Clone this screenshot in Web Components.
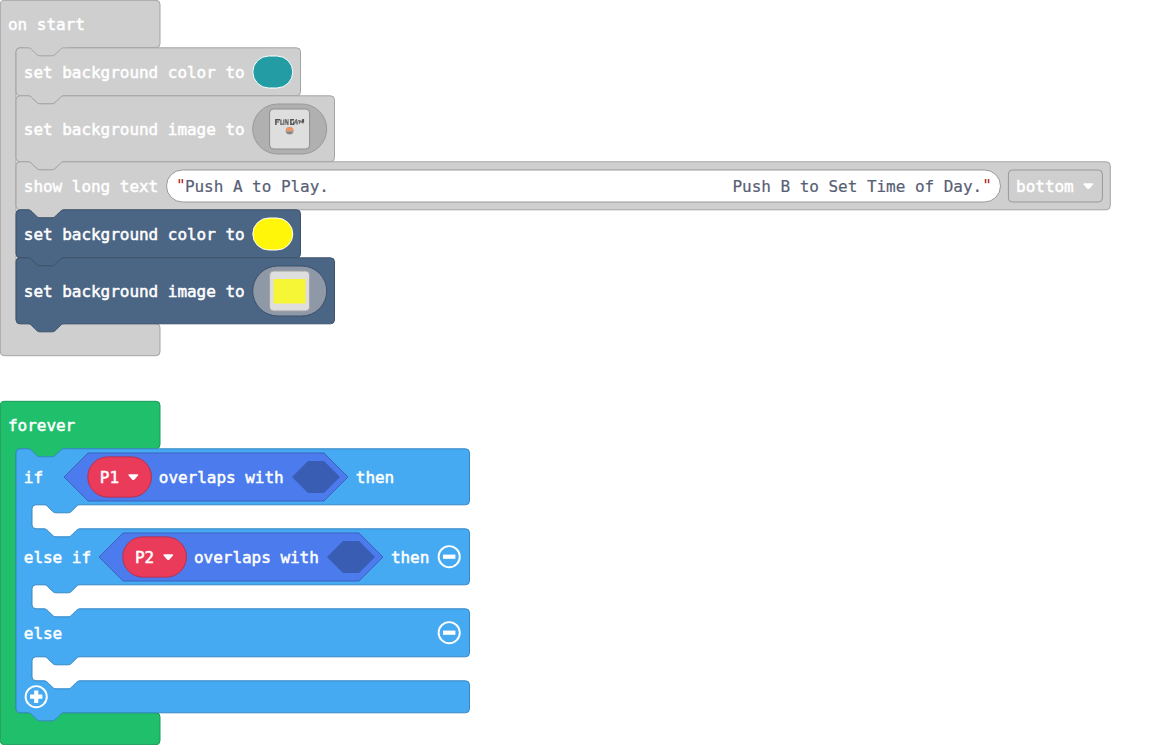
<!DOCTYPE html>
<html lang="en">
<head>
<meta charset="utf-8">
<title>Blocks workspace</title>
<style>
html,body{margin:0;background:#fff;overflow:hidden}
</style>
</head>
<body>
<blocks-workspace>
  <event-block label="on start" fill="#cfcfcf" edge="#a4a4a4" rows="276">
    <stack-block width="284.5" height="48" fill="#cfcfcf" edge="#a4a4a4">
      <block-label>set background color to</block-label><color-field color="#249ca3"></color-field>
    </stack-block>
    <stack-block width="318.5" height="66" fill="#cfcfcf" edge="#a4a4a4">
      <block-label>set background image to</block-label><image-field art="title" fill="#b0b0b0" edge="#999"></image-field>
    </stack-block>
    <stack-block width="1094.3" height="48" fill="#cfcfcf" edge="#a4a4a4">
      <block-label>show long text</block-label>
      <text-field><span>Push A to Play.</span><span>Push B to Set Time of Day.</span></text-field>
      <menu-field>bottom</menu-field>
    </stack-block>
    <stack-block width="284.5" height="48" fill="#4b6584" edge="#3c516a">
      <block-label>set background color to</block-label><color-field color="#fff609"></color-field>
    </stack-block>
    <stack-block width="318.5" height="66" fill="#4b6584" edge="#3c516a">
      <block-label>set background image to</block-label><image-field art="solid" fill="#8f98a6" edge="#3c516a"></image-field>
    </stack-block>
  </event-block>
  <event-block label="forever" fill="#20bf6b" edge="#1a9956" rows="264">
    <if-block>
      <block-label slot="r0" style="min-width:32px">if</block-label>
      <overlap-block slot="r0">P1</overlap-block>
      <block-label slot="r0">then</block-label>
      <block-label slot="r1">else if</block-label>
      <overlap-block slot="r1">P2</overlap-block>
      <block-label slot="r1">then</block-label>
      <round-button slot="r1"></round-button>
      <block-label slot="r2">else</block-label>
      <round-button slot="r2"></round-button>
      <round-button slot="r3" plus></round-button>
    </if-block>
  </event-block>
</blocks-workspace>
<script>
const NOTCH = 'c2,0 3,1 4,2 l4,4 c1,1 2,2 4,2 h12 c2,0 3,-1 4,-2 l4,-4 c1,-1 2,-2 4,-2';
const NOTCH_BACK = 'c-2,0 -3,1 -4,2 l-4,4 c-1,1 -2,2 -4,2 h-12 c-2,0 -3,-1 -4,-2 l-4,-4 c-1,-1 -2,-2 -4,-2';
const BASE = `:host{display:block;box-sizing:border-box;position:relative}
  *{box-sizing:border-box}
  .shape{position:absolute;left:0;top:0;overflow:visible;pointer-events:none}`;
const shape = (w, h, d, fill, edge) =>
  `<svg class="shape" width="${w}" height="${h}" viewBox="0 0 ${w} ${h}"><path d="${d}" fill="${fill}" stroke="${edge}" stroke-width="1"/></svg>`;

function define(name, render) {
  customElements.define(name, class extends HTMLElement {
    constructor() {
      super();
      this.attachShadow({mode: 'open'});
    }
    connectedCallback() {
      this.shadowRoot.innerHTML = render(n => this.getAttribute(n), this);
    }
  });
}

define('blocks-workspace', () => `<style>
  :host{display:flex;flex-direction:column;align-items:flex-start;gap:45px;width:1162px;height:745px;overflow:hidden;
    font:16px/20px "DejaVu Sans Mono",monospace;letter-spacing:-.033px;color:#fff}
  </style><slot></slot>`);

define('event-block', a => {
  const rows = +a('rows'), h = rows + 80, b = 48 + rows;
  const d = `M.3,4.3 a4,4 0 0 1 4,-4 H156 a4,4 0 0 1 4,4 V43.7 a4,4 0 0 1 -4,4 H64 H20 a4,4 0 0 0 -4,4 V${b - 4.3} a4,4 0 0 0 4,4 H156 a4,4 0 0 1 4,4 V${h - 4.3} a4,4 0 0 1 -4,4 H4.3 a4,4 0 0 1 -4,-4 z`;
  return `<style>${BASE}
    :host{display:grid;grid-template-rows:48px ${rows}px 32px;height:${h}px}
    header{position:relative;display:flex;align-items:center;padding:0 8px}
    .rows{position:relative;display:flex;flex-direction:column;align-items:flex-start;padding-left:15.800px}
    .under{position:absolute;left:24px;top:47px;width:46px;height:12px;background:${a('fill')}}
    </style>${shape(160, h, d, a('fill'), a('edge'))}<div class="under"></div>
    <header><block-label>${a('label')}</block-label></header><div class="rows"><slot></slot></div>`;
});

define('stack-block', a => {
  const w = +a('width'), h = +a('height');
  const d = `M0,3.8 a4,4 0 0 1 4,-4 H12 ${NOTCH} H${w - 4} a4,4 0 0 1 4,4 V${h - 4.2} a4,4 0 0 1 -4,4 H48 ${NOTCH_BACK} H4 a4,4 0 0 1 -4,-4 z`;
  return `<style>${BASE}
    :host{display:flex;align-items:center;gap:8px;width:${w}px;height:${h}px;padding:0 8px}
    </style>${shape(w, h, d, a('fill'), a('edge'))}<slot></slot>`;
});

define('block-label', () => `<style>
  :host{display:block;position:relative;white-space:pre;padding-top:1px;margin-bottom:-1px;-webkit-text-stroke:.5px currentColor}
  </style><slot></slot>`);

define('color-field', a => `<style>
  :host{display:block;position:relative;width:40px;height:32px;margin-left:-.2px}
  svg{display:block;overflow:visible}
  </style><svg width="40" height="32"><rect x=".8" y="0" width="40" height="32" rx="16" fill="${a('color')}" stroke="#fff"/></svg>`);

const titleArt = `<g fill="#555"><path d="M5.500 10h5v1.400h-3.500v1h2.500v1.200h-2.500v2.400h-1.500z"/>
  <path d="M10.500 10.500h1.500v4h1.500v-4h1v5.500h-4z" opacity=".75"/><path d="M15 10h1.500l1.500 3v-3h1v6h-1.500l-1.500-3v3h-1z" opacity=".8"/>
  <path d="M20.500 10h4v1.500h-2.500v3h1.500v-2h1v3.500h-4z"/><path d="M25 12l1.500-2h1l1 5.500h-1.500l-.8-2-1 2h-1.200z" opacity=".75"/>
  <path d="M28.500 11h2l1 1.200 1-1.200h1.500v3.500h-1.300v-1.500l-1 1-1.200-1v2h-1z" opacity=".8"/><path d="M32.500 10h2v3.500h-2z"/></g>
  <ellipse cx="20" cy="21.800" rx="4" ry="3.800" fill="#a29c98"/><path d="M16.400 21.200q.5-3 3.600-3t3.700 3l-1 .8h-4.900z" fill="#f4915c"/><path d="M17.500 23.300h5v1.200h-5z" fill="#777"/>`;
define('image-field', a => {
  const title = a('art') === 'title';
  return `<style>
  :host{display:block;position:relative;width:74px;height:50px;margin-left:-.200px}
  svg{display:block;overflow:visible}
  </style><svg width="74" height="50"><rect x=".7" y="0" width="74" height="50" rx="25" fill="${a('fill')}" stroke="${a('edge')}"/>
  <g transform="translate(17.600 5)"><rect x="0" y="0" width="40" height="40" rx="4" fill="#dedede" stroke="${title ? '#8e8e8e' : '#a2a2a6'}"/>
  ${title ? titleArt : '<rect x="4" y="8" width="32" height="24.500" fill="#f6f636"/>'}</g></svg>`;
});

define('text-field', () => `<style>
  :host{display:flex;position:relative;align-items:center;width:834px;height:32px;color:#575e75;-webkit-text-stroke:.2px currentColor}
  svg{position:absolute;left:0;top:0;overflow:visible}
  .value{display:flex;position:relative;flex:1;justify-content:space-between;white-space:pre;padding-top:1px}
  i{position:relative;font-style:normal;color:#b02020;-webkit-text-stroke:0;width:9px;text-align:center}
  i:first-of-type{margin-left:9.700px}
  i:last-of-type{margin-right:8px;width:10px}
  </style><svg width="834" height="32"><rect x=".5" y="0" width="834" height="32" rx="16" fill="#fff" stroke="#999"/></svg><i>"</i><div class="value"><slot></slot></div><i>"</i>`);

const ARROW = '<svg class="arrow" style="position:relative;flex:none;margin-left:.800px" width="11" height="7" viewBox="0 0 11 7"><path d="M1.400.2h7.800q1.300.1 1 1-.1.300-.4.600l-3.300 3.600q-1.200 1.200-2.400 0L.8 1.800Q.5 1.500.4 1.200.1.300 1.400.2z" fill="#fff"/></svg>';
define('menu-field', () => `<style>
  :host{display:flex;position:relative;align-items:center;gap:8px;box-sizing:border-box;width:94px;height:32px;padding-left:8px}
  .frame{position:absolute;left:0;top:0;overflow:visible}
  </style><svg class="frame" width="94" height="32"><rect x=".4" y="0" width="94" height="32" rx="4" fill="none" stroke="#999"/></svg><block-label><slot></slot></block-label>${ARROW}`);

define('overlap-block', () => `<style>${BASE}
  :host{display:flex;align-items:center;gap:8px;width:284px;height:48px;padding:0 8px 0 24px}
  .sprite{position:relative;display:flex;align-items:center;gap:8px;width:63.500px;height:40px;padding-left:12px}
  .hole{position:relative;display:block;flex:none}
  .name{margin-left:-.500px}
  </style>${shape(284, 48, 'M24,0 H260 L284,24 260,48 H24 L0,24z', '#4b7bec', '#3c62bd')}
  <div class="sprite"><svg class="shape" width="64" height="40"><rect x="-.2" y="-.1" width="63.600" height="40.200" rx="20" fill="#eb3b5a" stroke="#bc2f48"/></svg><block-label>${'<slot></slot>'}</block-label>${ARROW}</div>
  <block-label class="name">overlaps with</block-label>
  <svg class="hole" width="48" height="32"><path d="M16,0H32L48,16 32,32H16L0,16z" fill="#395db3"/></svg>`);

define('round-button', (a, el) => `<style>
  :host{display:block;position:relative;width:24px;height:24px}
  :host([slot=r1]),:host([slot=r2]){margin-left:auto}
  svg{display:block}
  </style><svg width="24" height="24"><circle cx="12.200" cy="11.700" r="10.600" fill="none" stroke="#fff" stroke-width="1.900"/>
  <path d="M6 11.700h12.400${el.hasAttribute('plus') ? 'M12.200 5.500v12.400' : ''}" stroke="#fff" stroke-width="4.200"/></svg>`);

define('if-block', () => {
  const right = y => `H449.500 a4,4 0 0 1 4,4 V${y - 4.2} a4,4 0 0 1 -4,4 H64 ${NOTCH_BACK} H20 a4,4 0 0 0 -4,4 V${y + 19.8} a4,4 0 0 0 4,4 H28 ${NOTCH} `;
  const d = `M0,3.800 a4,4 0 0 1 4,-4 H12 ${NOTCH} ` + right(56) + right(136) + right(208) +
    `H449.500 a4,4 0 0 1 4,4 V259.800 a4,4 0 0 1 -4,4 H48 ${NOTCH_BACK} H4 a4,4 0 0 1 -4,-4 z`;
  return `<style>${BASE}
    :host{display:grid;grid-template-rows:56px 56px 48px 32px;row-gap:24px;width:453.500px;height:264px}
    .row{display:flex;align-items:center;gap:8px;padding:0 8px;min-width:0}
    </style>${shape(453.5, 264, d, '#45aaf2', '#3788c2')}
    <div class="row"><slot name="r0"></slot></div><div class="row"><slot name="r1"></slot></div>
    <div class="row"><slot name="r2"></slot></div><div class="row"><slot name="r3"></slot></div>`;
});
</script>
</body>
</html>
